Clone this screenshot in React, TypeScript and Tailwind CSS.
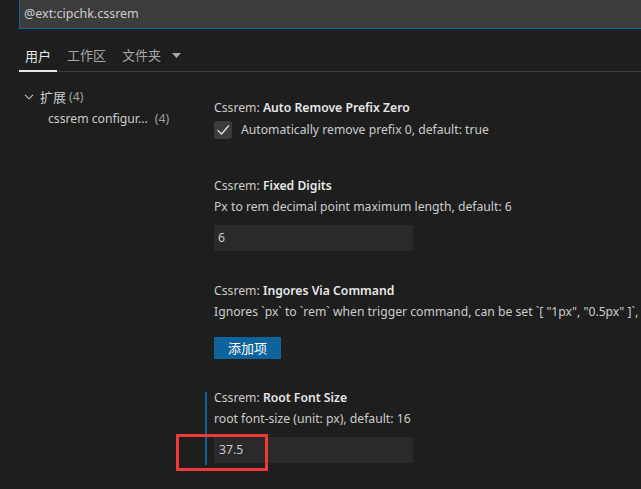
import React from "react";

const font = { fontFamily: '"Noto Sans", "Noto Sans CJK SC", sans-serif' };

function Check() {
  return (
    <div className="w-[18px] h-[18px] rounded-[3px] bg-[#3c3c3c] flex items-center justify-center shrink-0">
      <svg width="14" height="14" viewBox="0 0 14 14" fill="none">
        <path d="M2 7.5 L5.5 11 L12.5 3" stroke="#e0e0e0" strokeWidth="1.4" strokeLinecap="round" strokeLinejoin="round" />
      </svg>
    </div>
  );
}

function Title({ name }: { name: string }) {
  return (
    <div className="leading-[12px] h-[12px] text-[12.2px] whitespace-nowrap">
      <span className="text-[#cccccc]">Cssrem: </span>
      <span className="text-[#e7e7e7] font-semibold">{name}</span>
    </div>
  );
}

export default function App() {
  return (
    <div className="w-[641px] h-[489px] overflow-hidden bg-[#1e1e1e] relative" style={font}>
      {/* search */}
      <div className="ml-[19px] h-[29px] bg-[#3c3c3c] border-l border-b border-[#0e639c] flex items-center pl-[4px] text-[12.5px] text-[#cccccc]">
        @ext:cipchk.cssrem
      </div>
      {/* tabs */}
      <div className="ml-[19px] mt-[17px] flex items-end border-b border-[#3c3c3c] h-[26px] text-[13px]">
        <div className="px-[6px] h-full flex items-start border-b-2 border-[#e7e7e7] -mb-[1px] text-[#e7e7e7] leading-[18px]">用户</div>
        <div className="ml-[4px] px-[6px] h-full flex items-start text-[#a8a8a8] leading-[18px]">工作区</div>
        <div className="ml-[4px] px-[6px] h-full flex items-start text-[#a8a8a8] leading-[18px]">
          文件夹
          <svg className="ml-[11px] mt-[7px]" width="9" height="5" viewBox="0 0 9 5"><path d="M0 0 L9 0 L4.5 5 Z" fill="#a8a8a8" /></svg>
        </div>
      </div>
      <div className="flex">
        {/* tree */}
        <div className="w-[205px] shrink-0 pt-[14px] text-[12.2px]">
          <div className="h-[22px] flex items-center pl-[24px] leading-[22px]">
            <svg width="10" height="6" viewBox="0 0 10 6" fill="none" className="mr-[6px]"><path d="M1 0.8 L5 4.8 L9 0.8" stroke="#c5c5c5" strokeWidth="1.1" /></svg>
            <span className="text-[#cccccc] text-[13px]">扩展</span>
            <span className="text-[#a0a0a0] ml-[3px]">(4)</span>
          </div>
          <div className="h-[22px] flex items-center pl-[48px] leading-[22px]">
            <span className="text-[#cccccc]">cssrem configur...</span>
            <span className="text-[#a0a0a0] ml-[7px]">(4)</span>
          </div>
        </div>
        {/* settings */}
        <div className="flex-1 min-w-0 flex flex-col">
          <div className="mt-[30px] border-l-2 border-transparent pl-[7px]">
            <Title name="Auto Remove Prefix Zero" />
            <div className="mt-[7px] flex items-center">
              <Check />
              <span className="ml-[9px] text-[12.2px] text-[#cccccc] whitespace-nowrap">Automatically remove prefix 0, default: true</span>
            </div>
          </div>
          <div className="mt-[41px] border-l-2 border-transparent pl-[7px]">
            <Title name="Fixed Digits" />
            <div className="mt-[6px] leading-[18px] text-[12.2px] text-[#cccccc] whitespace-nowrap">Px to rem decimal point maximum length, default: 6</div>
            <div className="mt-[9px] w-[199px] h-[26px] bg-[#2a2a2a] flex items-center pl-[4px] text-[12.2px] text-[#cccccc]">6</div>
          </div>
          <div className="mt-[34px] border-l-2 border-transparent pl-[7px]">
            <Title name="Ingores Via Command" />
            <div className="mt-[6px] leading-[18px] text-[12.2px] text-[#cccccc] whitespace-nowrap overflow-hidden">Ignores `px` to `rem` when trigger command, can be set `[ "1px", "0.5px" ]`, default: []</div>
            <div className="mt-[16px] w-[67px] h-[22px] bg-[#0e639c] flex items-center justify-center text-[13px] text-white">添加项</div>
          </div>
          <div className="mt-[33px] border-l-2 border-[#0e639c] pl-[7px] pb-[2px]">
            <Title name="Root Font Size" />
            <div className="mt-[6px] leading-[18px] text-[12.2px] text-[#cccccc] whitespace-nowrap">root font-size (unit: px), default: 16</div>
            <div className="mt-[9px] w-[199px] h-[26px] bg-[#2a2a2a] flex items-center pl-[5px] text-[12.2px] text-[#cccccc]">37.5</div>
          </div>
        </div>
      </div>
      {/* annotation */}
      <div className="absolute left-[176px] top-[434px] w-[92px] h-[37px] border-[3px] border-[#f03a3a]"></div>
    </div>
  );
}
